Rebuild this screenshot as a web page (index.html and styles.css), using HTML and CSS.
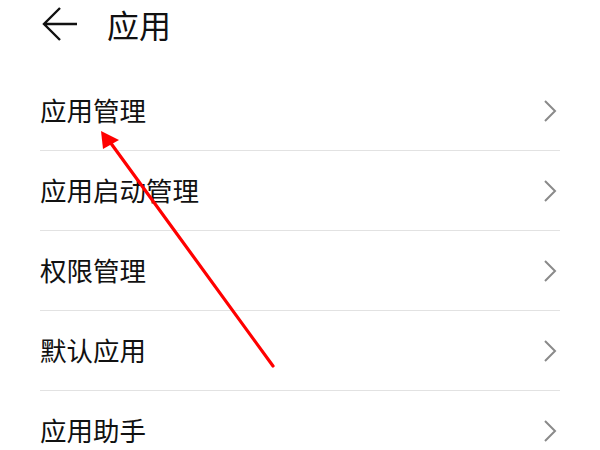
FILE: index.html
```html
<!DOCTYPE html>
<html lang="zh">
<head>
<meta charset="utf-8">
<link rel="stylesheet" href="styles.css">
</head>
<body>
<div class="page">
  <header class="header">
    <svg class="back" width="36" height="34" viewBox="0 0 36 34"><path d="M18 1 L2 17 L18 33 M2 17 H35" fill="none" stroke="#111" stroke-width="2.4"/></svg>
    <h1 class="title">应用</h1>
  </header>
  <ul class="list">
    <li class="row"><span class="label">应用管理</span><svg class="chev" width="14" height="24" viewBox="0 0 14 24"><path d="M2 2 L12 12 L2 22" fill="none" stroke="#8a8a8a" stroke-width="2"/></svg></li>
    <li class="row"><span class="label">应用启动管理</span><svg class="chev" width="14" height="24" viewBox="0 0 14 24"><path d="M2 2 L12 12 L2 22" fill="none" stroke="#8a8a8a" stroke-width="2"/></svg></li>
    <li class="row"><span class="label">权限管理</span><svg class="chev" width="14" height="24" viewBox="0 0 14 24"><path d="M2 2 L12 12 L2 22" fill="none" stroke="#8a8a8a" stroke-width="2"/></svg></li>
    <li class="row"><span class="label">默认应用</span><svg class="chev" width="14" height="24" viewBox="0 0 14 24"><path d="M2 2 L12 12 L2 22" fill="none" stroke="#8a8a8a" stroke-width="2"/></svg></li>
    <li class="row"><span class="label">应用助手</span><svg class="chev" width="14" height="24" viewBox="0 0 14 24"><path d="M2 2 L12 12 L2 22" fill="none" stroke="#8a8a8a" stroke-width="2"/></svg></li>
  </ul>
  <svg class="pointer" width="600" height="450" viewBox="0 0 600 450">
    <line x1="273" y1="366" x2="110" y2="142" stroke="#ff0000" stroke-width="3.2" stroke-linecap="round"/>
    <polygon points="101,131 119,140 103,149" fill="#ff0000"/>
  </svg>
</div>
</body>
</html>
```
FILE: styles.css
```css
html, body {
  margin: 0;
  padding: 0;
  background: #ffffff;
}
.page {
  position: relative;
  width: 600px;
  height: 450px;
  overflow: hidden;
  font-family: "Noto Sans CJK SC", "Noto Sans", sans-serif;
  color: #111111;
}
.header {
  display: flex;
  align-items: center;
  height: 48px;
  padding-left: 42px;
  margin-bottom: 23px;
}
.back {
  display: block;
  margin-right: 29px;
}
.title {
  margin: 0;
  font-size: 32px;
  font-weight: 400;
  line-height: 1;
}
.list {
  list-style: none;
  margin: 0 40px;
  padding: 0;
}
.row {
  display: flex;
  align-items: center;
  justify-content: space-between;
  height: 80px;
  border-bottom: 1px solid #e2e2e2;
  box-sizing: border-box;
}
.label {
  font-size: 26.5px;
  line-height: 1;
}
.chev {
  display: block;
  margin-right: 3px;
}
.pointer {
  position: absolute;
  left: 0;
  top: 0;
}
```
